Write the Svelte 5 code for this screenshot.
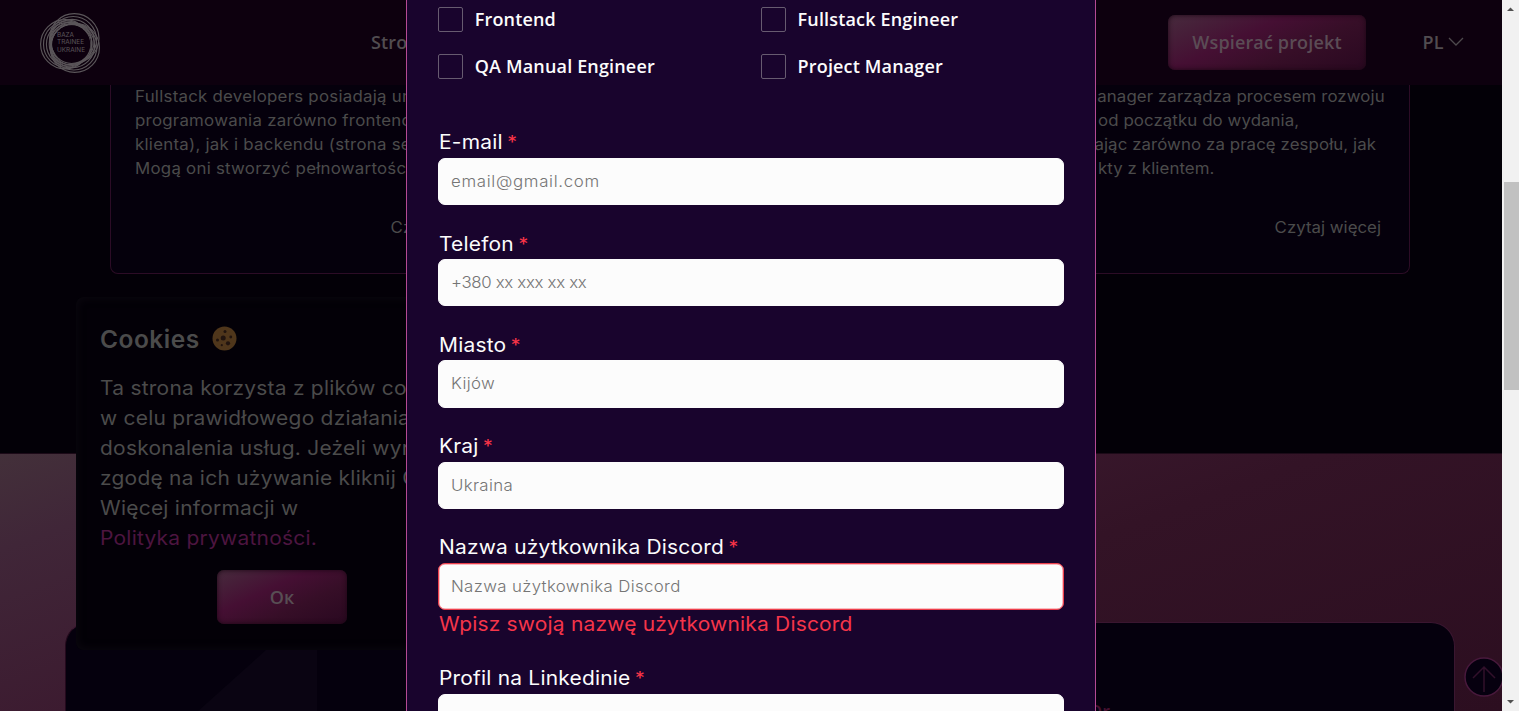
<script>
  const roles = ['Frontend', 'Fullstack Engineer', 'QA Manual Engineer', 'Project Manager'];

  const fields = [
    { label: 'E-mail', placeholder: 'email@gmail.com', kind: 'email' },
    { label: 'Telefon', placeholder: '+380 xx xxx xx xx', kind: 'phone' },
    { label: 'Miasto', placeholder: 'Kijów' },
    { label: 'Kraj', placeholder: 'Ukraina' },
    {
      label: 'Nazwa użytkownika Discord',
      placeholder: 'Nazwa użytkownika Discord',
      error: 'Wpisz swoją nazwę użytkownika Discord'
    },
    { label: 'Profil na Linkedinie', placeholder: '' }
  ];
</script>

<div class="window">
  <div class="page">
    <header>
      <svg class="logo" viewBox="0 0 60 60" width="60" height="60">
        <g fill="none" stroke="#5b565a" stroke-width="1.15">
          <circle cx="34.3" cy="25.3" r="24.7" />
          <circle cx="33.2" cy="26.8" r="23.3" />
          <circle cx="32.2" cy="28.2" r="21.9" />
          <circle cx="31.4" cy="29.6" r="20.4" />
          <circle cx="25.2" cy="31.2" r="24.6" />
          <circle cx="26.7" cy="31.2" r="23.2" />
          <circle cx="28.2" cy="31.2" r="21.8" />
          <circle cx="29.6" cy="31.2" r="20.4" />
          <circle cx="34.8" cy="34.8" r="24.6" />
          <circle cx="33.8" cy="33.8" r="23.2" />
          <circle cx="32.8" cy="32.8" r="21.8" />
          <circle cx="31.8" cy="31.8" r="20.2" />
        </g>
        <circle cx="31.5" cy="31.2" r="18.8" fill="#0d000e" />
        <g class="logo-text" fill="#5b565a">
          <text x="17" y="23.6" textLength="17" lengthAdjust="spacingAndGlyphs">BAZA</text>
          <text x="17" y="31.4" textLength="27" lengthAdjust="spacingAndGlyphs">TRAINEE</text>
          <text x="17" y="38.8" textLength="28" lengthAdjust="spacingAndGlyphs">UKRAINE</text>
        </g>
      </svg>
      <span class="nav">Stro</span>
      <span class="support">Wspierać projekt</span>
      <span class="lang">PL
        <svg width="16" height="10" viewBox="0 0 16 10"><path d="M1 1 L8 8 L15 1" fill="none" stroke="#4e494d" stroke-width="1.3" /></svg>
      </span>
    </header>

    <section class="cards">
      <article>
        <p>Fullstack developers posiadają um</p>
        <p>programowania zarówno frontend</p>
        <p>klienta), jak i backendu (strona ser</p>
        <p>Mogą oni stworzyć pełnowartościo</p>
        <a>Czytaj więcej</a>
      </article>
      <article></article>
      <article class="manager">
        <p>Manager zarządza procesem rozwoju</p>
        <p>od początku do wydania,</p>
        <p>dając zarówno za pracę zespołu, jak</p>
        <p>kty z klientem.</p>
        <a>Czytaj więcej</a>
      </article>
    </section>

    <section class="gradient">
      <div class="panel">
        <svg class="wave" width="140" height="89" viewBox="0 0 140 89">
          <path d="M119 0 H140 V89 H20 Z" fill="#0a0412" />
        </svg>
        <span class="peek">Or</span>
      </div>
    </section>

    <aside class="cookies">
      <h2>Cookies
        <svg width="25" height="25" viewBox="0 0 25 25">
          <circle cx="12.5" cy="12.5" r="12" fill="#4f361b" />
          <g fill="#21140f">
            <circle cx="11.2" cy="12" r="2.5" />
            <circle cx="13" cy="5.4" r="1.5" />
            <circle cx="18.8" cy="11" r="1.4" />
            <circle cx="5.5" cy="14" r="1.5" />
            <circle cx="16" cy="17.3" r="2.1" />
            <circle cx="9.8" cy="19.2" r="1.1" />
          </g>
        </svg>
      </h2>
      <div class="copy">
        <p>Ta strona korzysta z plików coo</p>
        <p>w celu prawidłowego działania</p>
        <p>doskonalenia usług. Jeżeli wyra</p>
        <p>zgodę na ich używanie kliknij O</p>
        <p>Więcej informacji w</p>
        <p class="policy">Polityka prywatności.</p>
      </div>
      <button>Ок</button>
    </aside>

    <svg class="totop" width="40" height="40" viewBox="0 0 40 40">
      <circle cx="20" cy="20" r="19" fill="#06000f" stroke="#48193c" stroke-width="1.5" />
      <path d="M20 35 V10 M9 21 L20 10 L31 21" fill="none" stroke="#32102b" stroke-width="1.5" />
    </svg>
  </div>

  <form class="modal">
    <div class="roles">
      {#each roles as role}
        <div class="role"><i></i><span>{role}</span></div>
      {/each}
    </div>
    {#each fields as field}
      <div class="field" class:invalid={field.error}>
        <div class="label">{field.label} <b>*</b></div>
        <div class="input {field.kind ?? ''}"><span>{field.placeholder}</span></div>
        {#if field.error}<div class="error">{field.error}</div>{/if}
      </div>
    {/each}
  </form>

  <div class="scrollbar">
    <svg width="17" height="17" viewBox="0 0 17 17"><path d="M5 11 H12 L8.5 7.5 Z" fill="#505050" /></svg>
    <i></i>
    <svg class="down" width="17" height="17" viewBox="0 0 17 17"><path d="M5 6 H12 L8.5 9.5 Z" fill="#505050" /></svg>
  </div>
</div>

<style>
  :global(body) { margin: 0; overflow: hidden; background: #030007; }
  * { box-sizing: border-box; }
  p, h2 { margin: 0; }

  .window {
    position: relative;
    display: grid;
    grid-template-columns: 1502px 17px;
    width: 1519px;
    height: 711px;
    overflow: hidden;
    font-family: Inter, "Noto Sans", sans-serif;
  }
  .page {
    position: relative;
    grid-column: 1;
    height: 711px;
    overflow: hidden;
    background: #030007;
    color: #4b4b4b;
  }

  header {
    display: flex;
    align-items: center;
    height: 85px;
    padding-left: 40px;
    background: #0d000e;
    font: 600 18px "Open Sans", sans-serif;
    letter-spacing: 0.15px;
    color: #514c50;
  }
  .logo-text { font: 400 6.5px Inter, sans-serif; letter-spacing: 0; }
  .nav { margin-left: 271px; width: 797px; padding-bottom: 2px; }
  .support {
    width: 198px;
    height: 55px;
    border-radius: 7px;
    line-height: 55px;
    text-align: center;
    background: linear-gradient(155deg, #472b3d 0%, #450f33 38%, #360e27 65%, #290820 100%);
    box-shadow: inset 0 0 5px #1c0715;
    color: #5b4c55;
  }
  .lang { display: flex; align-items: center; gap: 4px; margin-left: 56.5px; padding-bottom: 2px; }

  .cards {
    display: grid;
    grid-template-columns: repeat(3, 416px);
    gap: 26px;
    height: 368px;
    padding: 0 109.5px;
    align-items: start;
  }
  article {
    display: flex;
    flex-direction: column;
    height: 188.5px;
    padding: 0 28px 0 24px;
    border: 1px solid #2c0c26;
    border-top: 0;
    border-radius: 0 0 8px 8px;
    background: #05000c;
    font-size: 15.6px;
    letter-spacing: 0.015em;
    white-space: nowrap;
  }
  article p { height: 24px; line-height: 24px; transform: scaleX(1.08); transform-origin: 0 50%; }
  article a {
    margin-top: 35px;
    line-height: 24px;
    letter-spacing: 0;
    text-align: right;
    transform: scaleX(1.08);
    transform-origin: 100% 50%;
  }
  .manager { padding-left: 103px; letter-spacing: 0.005em; }
  .manager p:nth-child(1) { margin-left: -16px; }
  .manager p:nth-child(3) { margin-left: -14px; }

  .gradient {
    height: 258px;
    padding: 168px 47px 0 65px;
    border-top: 1px solid #1c0a18;
    background: linear-gradient(160deg, #43303a 0%, #402638 12%, #3c1b30 35%, #331326 60%, #2c0e20 100%);
  }
  .panel {
    position: relative;
    height: 100px;
    border: 1px solid #3a1630;
    border-left-color: #24091d;
    border-radius: 24px 24px 0 0;
    background: #05000d;
  }
  .wave { position: absolute; left: 111px; top: 0; }
  .peek {
    position: absolute;
    left: 1022px;
    top: 76px;
    font: 600 18px/24px "Open Sans", sans-serif;
    color: #451030;
  }

  .cookies {
    position: absolute;
    left: 76px;
    top: 297px;
    display: flex;
    flex-direction: column;
    width: 412px;
    height: 353px;
    padding: 26px 24px;
    border-radius: 8px;
    background: #030007;
    box-shadow: inset 0 0 10px #0d0911;
    white-space: nowrap;
  }
  h2 {
    display: flex;
    align-items: center;
    gap: 12px;
    height: 32px;
    font-size: 24.5px;
    font-weight: 600;
    letter-spacing: 0.02em;
  }
  .copy {
    margin-top: 19px;
    font-size: 19.4px;
    line-height: 30px;
    letter-spacing: 0.012em;
    transform: scaleX(1.08);
    transform-origin: 0 50%;
  }
  .policy { color: #4d1540; }
  button {
    align-self: center;
    width: 130px;
    height: 55px;
    margin-top: 16.5px;
    border: 0;
    border-radius: 7px;
    background: linear-gradient(155deg, #472b3d 0%, #450f33 38%, #360e27 65%, #290820 100%);
    box-shadow: inset 0 0 5px #1c0715;
    font: 600 18px "Open Sans", sans-serif;
    color: #584e54;
  }

  .totop { position: absolute; left: 1463.5px; top: 656.5px; }

  .modal {
    position: absolute;
    left: 406px;
    top: 0;
    width: 690px;
    height: 711px;
    padding: 7px 31px 0 31.4px;
    overflow: hidden;
    border: solid #b44a94;
    border-width: 0 1px;
    background: #19042d;
    color: #fcfcfc;
  }
  .roles {
    display: grid;
    grid-template-columns: 1fr 1fr;
    column-gap: 20px;
    row-gap: 22px;
    padding-bottom: 49.4px;
  }
  .role {
    display: flex;
    align-items: center;
    gap: 11.4px;
    height: 25px;
    font: 600 18px "Open Sans", sans-serif;
    letter-spacing: 0.16px;
  }
  .role span { padding-bottom: 2px; }
  .role i { width: 25px; height: 25px; border: 1px solid #675b70; border-radius: 2px; }

  .field { height: 101.2px; }
  .field.invalid { height: 131.2px; }
  .label,
  .error,
  .input span {
    transform: scaleX(1.08);
    transform-origin: 0 50%;
  }
  .label {
    height: 29.6px;
    margin-left: 1px;
    font-size: 19.4px;
    line-height: 29.4px;
    letter-spacing: 0.01em;
  }
  .label b { margin-left: -1.5px; font-size: 18px; font-weight: 400; line-height: 1; color: #fb3548; }
  .input {
    height: 47.2px;
    padding-left: 11.4px;
    border: 1px solid #fcfcfc;
    border-radius: 7px;
    background: #fcfcfc;
    font-size: 15.6px;
    font-weight: 300;
    line-height: 46px;
    letter-spacing: 0.02em;
    color: #757575;
  }
  .input span { display: block; }
  .email { letter-spacing: 0.04em; }
  .phone { letter-spacing: -0.02em; }
  .invalid .input { border: 1.5px solid #ed3f4c; box-shadow: inset 0 0 0 0.5px #f47c84; line-height: 45px; }
  .error {
    margin-left: 1px;
    font-size: 19.4px;
    line-height: 29px;
    letter-spacing: 0.01em;
    color: #f6354a;
  }

  .scrollbar {
    display: flex;
    flex-direction: column;
    align-items: center;
    grid-column: 2;
    background: #f1f1f1;
  }
  .scrollbar svg { display: block; }
  .scrollbar i { width: 15px; height: 208px; margin-top: 165px; margin-left: 1px; background: #c1c1c1; }
  .scrollbar .down { margin-top: auto; }
</style>
